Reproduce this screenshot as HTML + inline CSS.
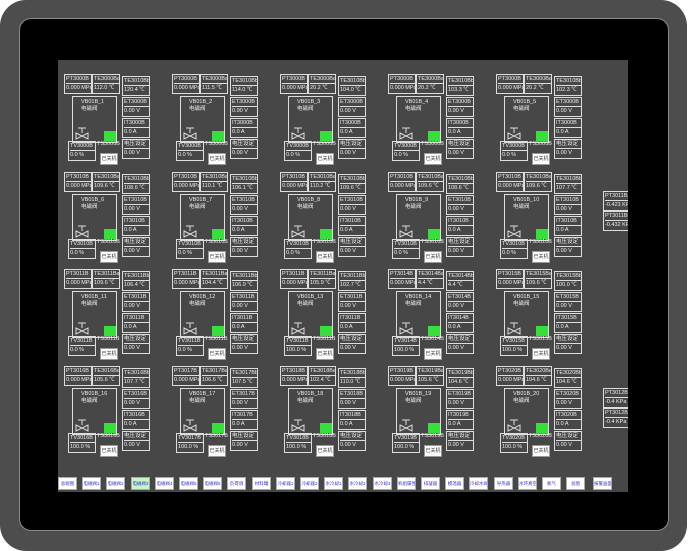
<!DOCTYPE html>
<html><head><meta charset="utf-8"><style>
*{margin:0;padding:0;box-sizing:border-box}
body{width:689px;height:551px;background:#fff;position:relative;overflow:hidden;font-family:"Liberation Sans","Noto Sans CJK SC",sans-serif}
#outer{position:absolute;left:0;top:0;width:687px;height:551px;background:#4d4d4d;border-radius:26px}
#inner{position:absolute;left:19px;top:18px;width:650px;height:513px;background:#000;border-radius:12px;border:1px solid #8a8a8a}
#panel{position:absolute;left:58px;top:60px;width:570px;height:432px;background:#474747;overflow:hidden}
.c{position:absolute;width:100px;height:95px}
.b{position:absolute;border:1px solid #ddd;color:#eee;font-size:5.5px;line-height:9px;white-space:nowrap;overflow:hidden;padding-left:1px}
.b div{border-bottom:1px solid #ddd;height:9px}
.b div:last-child{border:none}
.big{position:absolute;left:9px;top:24px;width:45px;height:47px;border:1px solid #ddd;color:#eee;font-size:5.5px;line-height:7px;padding:2px 0 0 8px}
.g{position:absolute;left:31px;top:34px;width:12px;height:10px;background:#35e03a}
.v{position:absolute;left:2px;top:29px}
.w{position:absolute;left:37px;top:81px;width:18px;height:12px;background:#fff;border:1px solid #999;font-size:5px;color:#333;text-align:center;line-height:10px}
.t{position:absolute;left:34px;top:69px;color:#eee;font-size:5.5px}
.bt{position:absolute;top:477px;width:19px;height:13px;background:#fff;border:1px solid #aaa;font-size:4.5px;color:#33c;text-align:center;line-height:11px;overflow:hidden;white-space:nowrap}
</style></head><body>
<div id="outer"></div><div id="inner"></div>
<div id="panel">
<div class="c" style="left:5px;top:12px"><div class="b" style="left:1px;top:2px;width:28px;height:20px"><div>PT3000B</div><div>0.000 MPa</div></div><div class="b" style="left:29px;top:2px;width:28px;height:20px"><div>TE3000Ba</div><div>112.0 ℃</div></div><div class="b" style="left:59px;top:4px;width:28px;height:20px"><div>TE3010Bb</div><div>120.4 ℃</div></div><div class="big">VB01B_1<br>电磁阀<svg class="v" width="14" height="14"><path d="M3 2h8M7 2v5M1 7l12 6V7L1 13z" stroke="#ddd" fill="none"/></svg><div class="g"></div></div><div class="b" style="left:59px;top:25px;width:28px;height:20px"><div>ET3000B</div><div>0.00 V</div></div><div class="b" style="left:59px;top:46px;width:28px;height:20px"><div>IT3000B</div><div>0.0 A</div></div><div class="b" style="left:59px;top:67px;width:28px;height:20px"><div>电压设定</div><div>0.00 V</div></div><div class="b" style="left:5px;top:69px;width:28px;height:20px"><div>TV3000B</div><div>0.0 %</div></div><div class="t">TS3000B</div><div class="w">已关机</div></div>
<div class="c" style="left:113px;top:12px"><div class="b" style="left:1px;top:2px;width:28px;height:20px"><div>PT3000B</div><div>0.000 MPa</div></div><div class="b" style="left:29px;top:2px;width:28px;height:20px"><div>TE3000Ba</div><div>111.5 ℃</div></div><div class="b" style="left:59px;top:4px;width:28px;height:20px"><div>TE3010Bb</div><div>114.0 ℃</div></div><div class="big">VB01B_2<br>电磁阀<svg class="v" width="14" height="14"><path d="M3 2h8M7 2v5M1 7l12 6V7L1 13z" stroke="#ddd" fill="none"/></svg><div class="g"></div></div><div class="b" style="left:59px;top:25px;width:28px;height:20px"><div>ET3000B</div><div>0.00 V</div></div><div class="b" style="left:59px;top:46px;width:28px;height:20px"><div>IT3000B</div><div>0.0 A</div></div><div class="b" style="left:59px;top:67px;width:28px;height:20px"><div>电压设定</div><div>0.00 V</div></div><div class="b" style="left:5px;top:69px;width:28px;height:20px"><div>TV3000B</div><div>0.0 %</div></div><div class="t">TS3000B</div><div class="w">已关机</div></div>
<div class="c" style="left:221px;top:12px"><div class="b" style="left:1px;top:2px;width:28px;height:20px"><div>PT3000B</div><div>0.000 MPa</div></div><div class="b" style="left:29px;top:2px;width:28px;height:20px"><div>TE3000Ba</div><div>20.2 ℃</div></div><div class="b" style="left:59px;top:4px;width:28px;height:20px"><div>TE3010Bb</div><div>104.0 ℃</div></div><div class="big">VB01B_3<br>电磁阀<svg class="v" width="14" height="14"><path d="M3 2h8M7 2v5M1 7l12 6V7L1 13z" stroke="#ddd" fill="none"/></svg><div class="g"></div></div><div class="b" style="left:59px;top:25px;width:28px;height:20px"><div>ET3000B</div><div>0.00 V</div></div><div class="b" style="left:59px;top:46px;width:28px;height:20px"><div>IT3000B</div><div>0.0 A</div></div><div class="b" style="left:59px;top:67px;width:28px;height:20px"><div>电压设定</div><div>0.00 V</div></div><div class="b" style="left:5px;top:69px;width:28px;height:20px"><div>TV3000B</div><div>0.0 %</div></div><div class="t">TS3000B</div><div class="w">已关机</div></div>
<div class="c" style="left:329px;top:12px"><div class="b" style="left:1px;top:2px;width:28px;height:20px"><div>PT3000B</div><div>0.000 MPa</div></div><div class="b" style="left:29px;top:2px;width:28px;height:20px"><div>TE3000Ba</div><div>20.2 ℃</div></div><div class="b" style="left:59px;top:4px;width:28px;height:20px"><div>TE3010Bb</div><div>103.3 ℃</div></div><div class="big">VB01B_4<br>电磁阀<svg class="v" width="14" height="14"><path d="M3 2h8M7 2v5M1 7l12 6V7L1 13z" stroke="#ddd" fill="none"/></svg><div class="g"></div></div><div class="b" style="left:59px;top:25px;width:28px;height:20px"><div>ET3000B</div><div>0.00 V</div></div><div class="b" style="left:59px;top:46px;width:28px;height:20px"><div>IT3000B</div><div>0.0 A</div></div><div class="b" style="left:59px;top:67px;width:28px;height:20px"><div>电压设定</div><div>0.00 V</div></div><div class="b" style="left:5px;top:69px;width:28px;height:20px"><div>TV3000B</div><div>0.0 %</div></div><div class="t">TS3000B</div><div class="w">已关机</div></div>
<div class="c" style="left:437px;top:12px"><div class="b" style="left:1px;top:2px;width:28px;height:20px"><div>PT3000B</div><div>0.000 MPa</div></div><div class="b" style="left:29px;top:2px;width:28px;height:20px"><div>TE3000Ba</div><div>20.2 ℃</div></div><div class="b" style="left:59px;top:4px;width:28px;height:20px"><div>TE3010Bb</div><div>102.3 ℃</div></div><div class="big">VB01B_5<br>电磁阀<svg class="v" width="14" height="14"><path d="M3 2h8M7 2v5M1 7l12 6V7L1 13z" stroke="#ddd" fill="none"/></svg><div class="g"></div></div><div class="b" style="left:59px;top:25px;width:28px;height:20px"><div>ET3000B</div><div>0.00 V</div></div><div class="b" style="left:59px;top:46px;width:28px;height:20px"><div>IT3000B</div><div>0.0 A</div></div><div class="b" style="left:59px;top:67px;width:28px;height:20px"><div>电压设定</div><div>0.00 V</div></div><div class="b" style="left:5px;top:69px;width:28px;height:20px"><div>TV3000B</div><div>0.0 %</div></div><div class="t">TS3000B</div><div class="w">已关机</div></div>

<div class="c" style="left:5px;top:110px"><div class="b" style="left:1px;top:2px;width:28px;height:20px"><div>PT3010B</div><div>0.000 MPa</div></div><div class="b" style="left:29px;top:2px;width:28px;height:20px"><div>TE3010Ba</div><div>109.6 ℃</div></div><div class="b" style="left:59px;top:4px;width:28px;height:20px"><div>TE3010Bb</div><div>108.6 ℃</div></div><div class="big">VB01B_6<br>电磁阀<svg class="v" width="14" height="14"><path d="M3 2h8M7 2v5M1 7l12 6V7L1 13z" stroke="#ddd" fill="none"/></svg><div class="g"></div></div><div class="b" style="left:59px;top:25px;width:28px;height:20px"><div>ET3010B</div><div>0.00 V</div></div><div class="b" style="left:59px;top:46px;width:28px;height:20px"><div>IT3010B</div><div>0.0 A</div></div><div class="b" style="left:59px;top:67px;width:28px;height:20px"><div>电压设定</div><div>0.00 V</div></div><div class="b" style="left:5px;top:69px;width:28px;height:20px"><div>TV3010B</div><div>0.0 %</div></div><div class="t">TS3010B</div><div class="w">已关机</div></div>
<div class="c" style="left:113px;top:110px"><div class="b" style="left:1px;top:2px;width:28px;height:20px"><div>PT3010B</div><div>0.000 MPa</div></div><div class="b" style="left:29px;top:2px;width:28px;height:20px"><div>TE3010Ba</div><div>110.1 ℃</div></div><div class="b" style="left:59px;top:4px;width:28px;height:20px"><div>TE3010Bb</div><div>106.1 ℃</div></div><div class="big">VB01B_7<br>电磁阀<svg class="v" width="14" height="14"><path d="M3 2h8M7 2v5M1 7l12 6V7L1 13z" stroke="#ddd" fill="none"/></svg><div class="g"></div></div><div class="b" style="left:59px;top:25px;width:28px;height:20px"><div>ET3010B</div><div>0.00 V</div></div><div class="b" style="left:59px;top:46px;width:28px;height:20px"><div>IT3010B</div><div>0.0 A</div></div><div class="b" style="left:59px;top:67px;width:28px;height:20px"><div>电压设定</div><div>0.00 V</div></div><div class="b" style="left:5px;top:69px;width:28px;height:20px"><div>TV3010B</div><div>0.0 %</div></div><div class="t">TS3010B</div><div class="w">已关机</div></div>
<div class="c" style="left:221px;top:110px"><div class="b" style="left:1px;top:2px;width:28px;height:20px"><div>PT3010B</div><div>0.000 MPa</div></div><div class="b" style="left:29px;top:2px;width:28px;height:20px"><div>TE3010Ba</div><div>110.2 ℃</div></div><div class="b" style="left:59px;top:4px;width:28px;height:20px"><div>TE3010Bb</div><div>109.6 ℃</div></div><div class="big">VB01B_8<br>电磁阀<svg class="v" width="14" height="14"><path d="M3 2h8M7 2v5M1 7l12 6V7L1 13z" stroke="#ddd" fill="none"/></svg><div class="g"></div></div><div class="b" style="left:59px;top:25px;width:28px;height:20px"><div>ET3010B</div><div>0.00 V</div></div><div class="b" style="left:59px;top:46px;width:28px;height:20px"><div>IT3010B</div><div>0.0 A</div></div><div class="b" style="left:59px;top:67px;width:28px;height:20px"><div>电压设定</div><div>0.00 V</div></div><div class="b" style="left:5px;top:69px;width:28px;height:20px"><div>TV3010B</div><div>0.0 %</div></div><div class="t">TS3010B</div><div class="w">已关机</div></div>
<div class="c" style="left:329px;top:110px"><div class="b" style="left:1px;top:2px;width:28px;height:20px"><div>PT3010B</div><div>0.000 MPa</div></div><div class="b" style="left:29px;top:2px;width:28px;height:20px"><div>TE3010Ba</div><div>109.6 ℃</div></div><div class="b" style="left:59px;top:4px;width:28px;height:20px"><div>TE3010Bb</div><div>108.6 ℃</div></div><div class="big">VB01B_9<br>电磁阀<svg class="v" width="14" height="14"><path d="M3 2h8M7 2v5M1 7l12 6V7L1 13z" stroke="#ddd" fill="none"/></svg><div class="g"></div></div><div class="b" style="left:59px;top:25px;width:28px;height:20px"><div>ET3010B</div><div>0.00 V</div></div><div class="b" style="left:59px;top:46px;width:28px;height:20px"><div>IT3010B</div><div>0.0 A</div></div><div class="b" style="left:59px;top:67px;width:28px;height:20px"><div>电压设定</div><div>0.00 V</div></div><div class="b" style="left:5px;top:69px;width:28px;height:20px"><div>TV3010B</div><div>0.0 %</div></div><div class="t">TS3010B</div><div class="w">已关机</div></div>
<div class="c" style="left:437px;top:110px"><div class="b" style="left:1px;top:2px;width:28px;height:20px"><div>PT3010B</div><div>0.000 MPa</div></div><div class="b" style="left:29px;top:2px;width:28px;height:20px"><div>TE3010Ba</div><div>109.6 ℃</div></div><div class="b" style="left:59px;top:4px;width:28px;height:20px"><div>TE3010Bb</div><div>107.7 ℃</div></div><div class="big">VB01B_10<br>电磁阀<svg class="v" width="14" height="14"><path d="M3 2h8M7 2v5M1 7l12 6V7L1 13z" stroke="#ddd" fill="none"/></svg><div class="g"></div></div><div class="b" style="left:59px;top:25px;width:28px;height:20px"><div>ET3010B</div><div>0.00 V</div></div><div class="b" style="left:59px;top:46px;width:28px;height:20px"><div>IT3010B</div><div>0.0 A</div></div><div class="b" style="left:59px;top:67px;width:28px;height:20px"><div>电压设定</div><div>0.00 V</div></div><div class="b" style="left:5px;top:69px;width:28px;height:20px"><div>TV3010B</div><div>0.0 %</div></div><div class="t">TS3010B</div><div class="w">已关机</div></div>

<div class="c" style="left:5px;top:207px"><div class="b" style="left:1px;top:2px;width:28px;height:20px"><div>PT3011B</div><div>0.000 MPa</div></div><div class="b" style="left:29px;top:2px;width:28px;height:20px"><div>TE3011Ba</div><div>109.6 ℃</div></div><div class="b" style="left:59px;top:4px;width:28px;height:20px"><div>TE3011Bb</div><div>106.4 ℃</div></div><div class="big">VB01B_11<br>电磁阀<svg class="v" width="14" height="14"><path d="M3 2h8M7 2v5M1 7l12 6V7L1 13z" stroke="#ddd" fill="none"/></svg><div class="g"></div></div><div class="b" style="left:59px;top:25px;width:28px;height:20px"><div>ET3011B</div><div>0.00 V</div></div><div class="b" style="left:59px;top:46px;width:28px;height:20px"><div>IT3011B</div><div>0.0 A</div></div><div class="b" style="left:59px;top:67px;width:28px;height:20px"><div>电压设定</div><div>0.00 V</div></div><div class="b" style="left:5px;top:69px;width:28px;height:20px"><div>TV3011B</div><div>0.0 %</div></div><div class="t">TS3011B</div><div class="w">已关机</div></div>
<div class="c" style="left:113px;top:207px"><div class="b" style="left:1px;top:2px;width:28px;height:20px"><div>PT3011B</div><div>0.000 MPa</div></div><div class="b" style="left:29px;top:2px;width:28px;height:20px"><div>TE3011Ba</div><div>104.4 ℃</div></div><div class="b" style="left:59px;top:4px;width:28px;height:20px"><div>TE3011Bb</div><div>106.9 ℃</div></div><div class="big">VB01B_12<br>电磁阀<svg class="v" width="14" height="14"><path d="M3 2h8M7 2v5M1 7l12 6V7L1 13z" stroke="#ddd" fill="none"/></svg><div class="g"></div></div><div class="b" style="left:59px;top:25px;width:28px;height:20px"><div>ET3011B</div><div>0.00 V</div></div><div class="b" style="left:59px;top:46px;width:28px;height:20px"><div>IT3011B</div><div>0.0 A</div></div><div class="b" style="left:59px;top:67px;width:28px;height:20px"><div>电压设定</div><div>0.00 V</div></div><div class="b" style="left:5px;top:69px;width:28px;height:20px"><div>TV3011B</div><div>0.0 %</div></div><div class="t">TS3011B</div><div class="w">已关机</div></div>
<div class="c" style="left:221px;top:207px"><div class="b" style="left:1px;top:2px;width:28px;height:20px"><div>PT3011B</div><div>0.000 MPa</div></div><div class="b" style="left:29px;top:2px;width:28px;height:20px"><div>TE3011Ba</div><div>105.9 ℃</div></div><div class="b" style="left:59px;top:4px;width:28px;height:20px"><div>TE3011Bb</div><div>102.7 ℃</div></div><div class="big">VB01B_13<br>电磁阀<svg class="v" width="14" height="14"><path d="M3 2h8M7 2v5M1 7l12 6V7L1 13z" stroke="#ddd" fill="none"/></svg><div class="g"></div></div><div class="b" style="left:59px;top:25px;width:28px;height:20px"><div>ET3011B</div><div>0.00 V</div></div><div class="b" style="left:59px;top:46px;width:28px;height:20px"><div>IT3011B</div><div>0.0 A</div></div><div class="b" style="left:59px;top:67px;width:28px;height:20px"><div>电压设定</div><div>0.00 V</div></div><div class="b" style="left:5px;top:69px;width:28px;height:20px"><div>TV3011B</div><div>100.0 %</div></div><div class="t">TS3011B</div><div class="w">已关机</div></div>
<div class="c" style="left:329px;top:207px"><div class="b" style="left:1px;top:2px;width:28px;height:20px"><div>PT3014B</div><div>0.000 MPa</div></div><div class="b" style="left:29px;top:2px;width:28px;height:20px"><div>TE3014Ba</div><div>4.4 ℃</div></div><div class="b" style="left:59px;top:4px;width:28px;height:20px"><div>TE3014Bb</div><div>4.4 ℃</div></div><div class="big">VB01B_14<br>电磁阀<svg class="v" width="14" height="14"><path d="M3 2h8M7 2v5M1 7l12 6V7L1 13z" stroke="#ddd" fill="none"/></svg><div class="g"></div></div><div class="b" style="left:59px;top:25px;width:28px;height:20px"><div>ET3014B</div><div>0.00 V</div></div><div class="b" style="left:59px;top:46px;width:28px;height:20px"><div>IT3014B</div><div>0.0 A</div></div><div class="b" style="left:59px;top:67px;width:28px;height:20px"><div>电压设定</div><div>0.00 V</div></div><div class="b" style="left:5px;top:69px;width:28px;height:20px"><div>TV3014B</div><div>100.0 %</div></div><div class="t">TS3014B</div><div class="w">已关机</div></div>
<div class="c" style="left:437px;top:207px"><div class="b" style="left:1px;top:2px;width:28px;height:20px"><div>PT3015B</div><div>0.000 MPa</div></div><div class="b" style="left:29px;top:2px;width:28px;height:20px"><div>TE3015Ba</div><div>109.6 ℃</div></div><div class="b" style="left:59px;top:4px;width:28px;height:20px"><div>TE3015Bb</div><div>100.0 ℃</div></div><div class="big">VB01B_15<br>电磁阀<svg class="v" width="14" height="14"><path d="M3 2h8M7 2v5M1 7l12 6V7L1 13z" stroke="#ddd" fill="none"/></svg><div class="g"></div></div><div class="b" style="left:59px;top:25px;width:28px;height:20px"><div>ET3015B</div><div>0.00 V</div></div><div class="b" style="left:59px;top:46px;width:28px;height:20px"><div>IT3015B</div><div>0.0 A</div></div><div class="b" style="left:59px;top:67px;width:28px;height:20px"><div>电压设定</div><div>0.00 V</div></div><div class="b" style="left:5px;top:69px;width:28px;height:20px"><div>TV3015B</div><div>100.0 %</div></div><div class="t">TS3015B</div><div class="w">已关机</div></div>

<div class="c" style="left:5px;top:304px"><div class="b" style="left:1px;top:2px;width:28px;height:20px"><div>PT3016B</div><div>0.000 MPa</div></div><div class="b" style="left:29px;top:2px;width:28px;height:20px"><div>TE3016Ba</div><div>105.6 ℃</div></div><div class="b" style="left:59px;top:4px;width:28px;height:20px"><div>TE3016Bb</div><div>107.7 ℃</div></div><div class="big">VB01B_16<br>电磁阀<svg class="v" width="14" height="14"><path d="M3 2h8M7 2v5M1 7l12 6V7L1 13z" stroke="#ddd" fill="none"/></svg><div class="g"></div></div><div class="b" style="left:59px;top:25px;width:28px;height:20px"><div>ET3016B</div><div>0.00 V</div></div><div class="b" style="left:59px;top:46px;width:28px;height:20px"><div>IT3016B</div><div>0.0 A</div></div><div class="b" style="left:59px;top:67px;width:28px;height:20px"><div>电压设定</div><div>0.00 V</div></div><div class="b" style="left:5px;top:69px;width:28px;height:20px"><div>TV3016B</div><div>100.0 %</div></div><div class="t">TS3016B</div><div class="w">已关机</div></div>
<div class="c" style="left:113px;top:304px"><div class="b" style="left:1px;top:2px;width:28px;height:20px"><div>PT3017B</div><div>0.000 MPa</div></div><div class="b" style="left:29px;top:2px;width:28px;height:20px"><div>TE3017Ba</div><div>106.6 ℃</div></div><div class="b" style="left:59px;top:4px;width:28px;height:20px"><div>TE3017Bb</div><div>107.5 ℃</div></div><div class="big">VB01B_17<br>电磁阀<svg class="v" width="14" height="14"><path d="M3 2h8M7 2v5M1 7l12 6V7L1 13z" stroke="#ddd" fill="none"/></svg><div class="g"></div></div><div class="b" style="left:59px;top:25px;width:28px;height:20px"><div>ET3017B</div><div>0.00 V</div></div><div class="b" style="left:59px;top:46px;width:28px;height:20px"><div>IT3017B</div><div>0.0 A</div></div><div class="b" style="left:59px;top:67px;width:28px;height:20px"><div>电压设定</div><div>0.00 V</div></div><div class="b" style="left:5px;top:69px;width:28px;height:20px"><div>TV3017B</div><div>100.0 %</div></div><div class="t">TS3017B</div><div class="w">已关机</div></div>
<div class="c" style="left:221px;top:304px"><div class="b" style="left:1px;top:2px;width:28px;height:20px"><div>PT3018B</div><div>0.000 MPa</div></div><div class="b" style="left:29px;top:2px;width:28px;height:20px"><div>TE3018Ba</div><div>102.4 ℃</div></div><div class="b" style="left:59px;top:4px;width:28px;height:20px"><div>TE3018Bb</div><div>110.0 ℃</div></div><div class="big">VB01B_18<br>电磁阀<svg class="v" width="14" height="14"><path d="M3 2h8M7 2v5M1 7l12 6V7L1 13z" stroke="#ddd" fill="none"/></svg><div class="g"></div></div><div class="b" style="left:59px;top:25px;width:28px;height:20px"><div>ET3018B</div><div>0.00 V</div></div><div class="b" style="left:59px;top:46px;width:28px;height:20px"><div>IT3018B</div><div>0.0 A</div></div><div class="b" style="left:59px;top:67px;width:28px;height:20px"><div>电压设定</div><div>0.00 V</div></div><div class="b" style="left:5px;top:69px;width:28px;height:20px"><div>TV3018B</div><div>100.0 %</div></div><div class="t">TS3018B</div><div class="w">已关机</div></div>
<div class="c" style="left:329px;top:304px"><div class="b" style="left:1px;top:2px;width:28px;height:20px"><div>PT3019B</div><div>0.000 MPa</div></div><div class="b" style="left:29px;top:2px;width:28px;height:20px"><div>TE3019Ba</div><div>105.6 ℃</div></div><div class="b" style="left:59px;top:4px;width:28px;height:20px"><div>TE3019Bb</div><div>104.6 ℃</div></div><div class="big">VB01B_19<br>电磁阀<svg class="v" width="14" height="14"><path d="M3 2h8M7 2v5M1 7l12 6V7L1 13z" stroke="#ddd" fill="none"/></svg><div class="g"></div></div><div class="b" style="left:59px;top:25px;width:28px;height:20px"><div>ET3019B</div><div>0.00 V</div></div><div class="b" style="left:59px;top:46px;width:28px;height:20px"><div>IT3019B</div><div>0.0 A</div></div><div class="b" style="left:59px;top:67px;width:28px;height:20px"><div>电压设定</div><div>0.00 V</div></div><div class="b" style="left:5px;top:69px;width:28px;height:20px"><div>TV3019B</div><div>100.0 %</div></div><div class="t">TS3019B</div><div class="w">已关机</div></div>
<div class="c" style="left:437px;top:304px"><div class="b" style="left:1px;top:2px;width:28px;height:20px"><div>PT3020B</div><div>0.000 MPa</div></div><div class="b" style="left:29px;top:2px;width:28px;height:20px"><div>TE3020Ba</div><div>104.6 ℃</div></div><div class="b" style="left:59px;top:4px;width:28px;height:20px"><div>TE3020Bb</div><div>104.6 ℃</div></div><div class="big">VB01B_20<br>电磁阀<svg class="v" width="14" height="14"><path d="M3 2h8M7 2v5M1 7l12 6V7L1 13z" stroke="#ddd" fill="none"/></svg><div class="g"></div></div><div class="b" style="left:59px;top:25px;width:28px;height:20px"><div>ET3020B</div><div>0.00 V</div></div><div class="b" style="left:59px;top:46px;width:28px;height:20px"><div>IT3020B</div><div>0.0 A</div></div><div class="b" style="left:59px;top:67px;width:28px;height:20px"><div>电压设定</div><div>0.00 V</div></div><div class="b" style="left:5px;top:69px;width:28px;height:20px"><div>TV3020B</div><div>100.0 %</div></div><div class="t">TS3020B</div><div class="w">已关机</div></div>

<div class="b" style="left:545px;top:131px;width:30px;height:20px"><div>PT3011Ba</div><div>-0.423 KPa</div></div>
<div class="b" style="left:545px;top:151px;width:30px;height:20px"><div>PT3011Bb</div><div>-0.432 KPa</div></div>
<div class="b" style="left:545px;top:328px;width:30px;height:20px"><div>PT3012Ba</div><div>-0.4 KPa</div></div>
<div class="b" style="left:545px;top:348px;width:30px;height:20px"><div>PT3012Bb</div><div>-0.4 KPa</div></div>
</div>
<div class="bt" style="left:58px">总貌图</div><div class="bt" style="left:82px">电磁阀1</div><div class="bt" style="left:106px">电磁阀2</div><div class="bt" style="left:131px;background:#c8f5c8">电磁阀3</div><div class="bt" style="left:155px">电磁阀4</div><div class="bt" style="left:179px">电磁阀5</div><div class="bt" style="left:203px">电磁阀6</div><div class="bt" style="left:227px">负荷调</div><div class="bt" style="left:252px">材料罐</div><div class="bt" style="left:276px">冷却器1</div><div class="bt" style="left:300px">冷却器2</div><div class="bt" style="left:324px">水冷却1</div><div class="bt" style="left:348px">水冷却2</div><div class="bt" style="left:373px">水冷却3</div><div class="bt" style="left:397px">机组属性</div><div class="bt" style="left:421px">排凝器</div><div class="bt" style="left:445px">模温器</div><div class="bt" style="left:469px">冷却水阀</div><div class="bt" style="left:494px">导热器</div><div class="bt" style="left:518px">水环真空</div><div class="bt" style="left:542px">氮气</div><div class="bt" style="left:566px">总图</div><div class="bt" style="left:593px">报警画面</div>
</body></html>
